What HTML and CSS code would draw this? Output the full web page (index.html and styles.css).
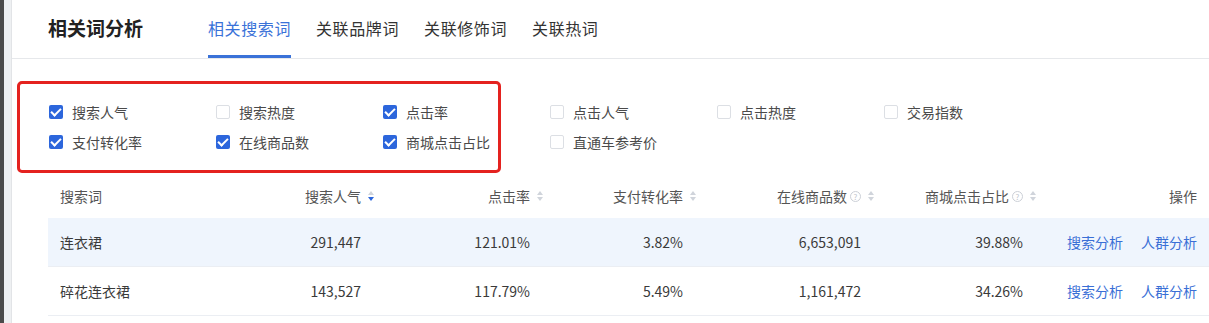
FILE: index.html
```html
<!DOCTYPE html>
<html lang="zh-CN">

<head>
  <meta charset="UTF-8">
  <meta name="viewport" content="width=device-width, initial-scale=1.0">
  <title>相关词分析</title>
  <link rel="stylesheet" href="styles.css">
</head>

<body>
  <div class="frame">
    <div class="side-bar"></div>
    <div class="side-gap"></div>
    <div class="panel">
      <div class="header">
        <h1 class="title">相关词分析</h1>
        <div class="tabs">
          <div class="tab active">相关搜索词</div>
          <div class="tab">关联品牌词</div>
          <div class="tab">关联修饰词</div>
          <div class="tab">关联热词</div>
        </div>
      </div>

      <div class="filters">
        <div class="mark-box"></div>
        <label class="check checked"><span class="box"></span>搜索人气</label>
        <label class="check"><span class="box"></span>搜索热度</label>
        <label class="check checked"><span class="box"></span>点击率</label>
        <label class="check"><span class="box"></span>点击人气</label>
        <label class="check"><span class="box"></span>点击热度</label>
        <label class="check"><span class="box"></span>交易指数</label>
        <label class="check checked"><span class="box"></span>支付转化率</label>
        <label class="check checked"><span class="box"></span>在线商品数</label>
        <label class="check checked"><span class="box"></span>商城点击占比</label>
        <label class="check"><span class="box"></span>直通车参考价</label>
      </div>

      <div class="table">
        <div class="row head">
          <div class="cell first">搜索词</div>
          <div class="cell num sortable">搜索人气<span class="sort desc"></span></div>
          <div class="cell num sortable">点击率<span class="sort"></span></div>
          <div class="cell num sortable">支付转化率<span class="sort"></span></div>
          <div class="cell num sortable">在线商品数<span class="help">?</span><span class="sort"></span></div>
          <div class="cell num sortable">商城点击占比<span class="help">?</span><span class="sort"></span></div>
          <div class="cell num last">操作</div>
        </div>
        <div class="row hover">
          <div class="cell first">连衣裙</div>
          <div class="cell num">291,447</div>
          <div class="cell num">121.01%</div>
          <div class="cell num">3.82%</div>
          <div class="cell num">6,653,091</div>
          <div class="cell num">39.88%</div>
          <div class="cell num last"><a class="link">搜索分析</a><a class="link">人群分析</a></div>
        </div>
        <div class="row">
          <div class="cell first">碎花连衣裙</div>
          <div class="cell num">143,527</div>
          <div class="cell num">117.79%</div>
          <div class="cell num">5.49%</div>
          <div class="cell num">1,161,472</div>
          <div class="cell num">34.26%</div>
          <div class="cell num last"><a class="link">搜索分析</a><a class="link">人群分析</a></div>
        </div>
      </div>
    </div>
  </div>
</body>

</html>
```

FILE: styles.css
```css
body {
  margin: 0;
  font-family: "Noto Sans CJK SC", "Noto Sans", sans-serif;
  background-color: #fff;
  color: #3a3a3a;
  overflow: hidden;
}

.frame {
  display: flex;
  height: 323px;
}

.side-bar {
  width: 4px;
  background-color: #4b4b4b;
}

.side-gap {
  width: 7px;
  background-color: #eef0f2;
  border-right: 1px solid #e2e4e7;
}

.panel {
  flex: 1;
  position: relative;
  background-color: #fff;
}

.header {
  display: flex;
  align-items: stretch;
  height: 58px;
  padding-left: 36px;
  border-bottom: 1px solid #e6e8eb;
}

.title {
  margin: 0;
  font-size: 19px;
  font-weight: bold;
  color: #222;
  line-height: 56px;
  width: 160px;
}

.tabs {
  display: flex;
  gap: 25px;
}

.tab {
  font-size: 16px;
  letter-spacing: 0.6px;
  color: #333;
  box-sizing: border-box;
  border-bottom: 3px solid transparent;
  line-height: 56px;
}

.tab.active {
  color: #3a72d8;
  border-bottom-color: #3a72d8;
}

.filters {
  position: relative;
  display: grid;
  grid-template-columns: repeat(6, 167px);
  grid-auto-rows: 30px;
  padding: 38px 0 0 37px;
  box-sizing: border-box;
  height: 115px;
}

.mark-box {
  position: absolute;
  left: 5px;
  top: 22px;
  width: 484px;
  height: 92px;
  box-sizing: border-box;
  border: 3px solid #e4221f;
  border-radius: 5px;
}

.check {
  display: flex;
  align-items: center;
  font-size: 14px;
  color: #4a4a4a;
}

.box {
  width: 14px;
  height: 14px;
  box-sizing: border-box;
  border: 1px solid #dcdfe4;
  border-radius: 2px;
  margin-right: 9px;
  background-color: #fff;
}

.check.checked .box {
  border: none;
  background-color: #2c66dc;
  position: relative;
}

.check.checked .box::after {
  content: "";
  position: absolute;
  left: 4px;
  top: 1px;
  width: 4px;
  height: 8px;
  border: solid #fff;
  border-width: 0 2px 2px 0;
  transform: rotate(45deg);
}

.table {
  padding-left: 36px;
}

.row {
  display: grid;
  grid-template-columns: 152px 177px 169px 153px 178px 162px 158px;
  height: 48px;
  border-bottom: 1px solid #ebeef3;
  align-items: center;
  font-size: 14px;
}

.row.head {
  height: 44px;
  color: #555;
  border-bottom: none;
}

.row.hover {
  background-color: #eff5fd;
}

.cell {
  white-space: nowrap;
}

.cell.first {
  padding-left: 12px;
}

.cell.num {
  display: flex;
  justify-content: flex-end;
  align-items: center;
  padding-right: 16px;
}

.cell.sortable {
  padding-right: 2px;
}

.cell.last {
  padding-right: 0;
  gap: 18px;
}

.link {
  color: #3a6fd6;
}

.help {
  width: 11px;
  height: 11px;
  box-sizing: border-box;
  border: 1px solid #ccd0d7;
  border-radius: 50%;
  color: #c0c4cc;
  font-size: 8px;
  line-height: 9px;
  text-align: center;
  margin-left: 3px;
}

.sort {
  position: relative;
  width: 8px;
  height: 12px;
  margin-left: 6px;
}

.sort::before,
.sort::after {
  content: "";
  position: absolute;
  left: 1px;
  border-left: 3px solid transparent;
  border-right: 3px solid transparent;
}

.sort::before {
  top: 1px;
  border-bottom: 4px solid #d0d4db;
}

.sort::after {
  bottom: 1px;
  border-top: 4px solid #d0d4db;
}

.sort.desc::after {
  border-top-color: #2c66dc;
}
```
